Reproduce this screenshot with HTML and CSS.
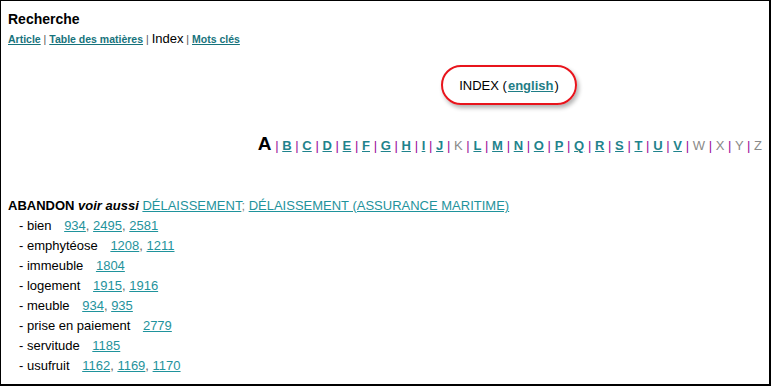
FILE: index.html
```html
<!DOCTYPE html>
<html lang="fr">

<head>
  <meta charset="utf-8">
  <link rel="stylesheet" href="styles.css">
</head>

<body>
  <div class="frame">
    <h1>Recherche</h1>
    <div class="nav">
      <a href="#">Article</a> <span class="sep">|</span>
      <a href="#">Table des matières</a> <span class="sep">|</span>
      <span class="current">Index</span> <span class="sep">|</span>
      <a href="#">Mots clés</a>
    </div>

    <div class="lang-row">
      <div class="lang-box">INDEX (<a href="#">english</a>)</div>
    </div>

    <div class="letters">
      <span class="active">A</span> <span class="bar">|</span>
      <a href="#">B</a> <span class="bar">|</span>
      <a href="#">C</a> <span class="bar">|</span>
      <a href="#">D</a> <span class="bar">|</span>
      <a href="#">E</a> <span class="bar">|</span>
      <a href="#">F</a> <span class="bar">|</span>
      <a href="#">G</a> <span class="bar">|</span>
      <a href="#">H</a> <span class="bar">|</span>
      <a href="#">I</a> <span class="bar">|</span>
      <a href="#">J</a> <span class="bar">|</span>
      <span class="off">K</span> <span class="bar">|</span>
      <a href="#">L</a> <span class="bar">|</span>
      <a href="#">M</a> <span class="bar">|</span>
      <a href="#">N</a> <span class="bar">|</span>
      <a href="#">O</a> <span class="bar">|</span>
      <a href="#">P</a> <span class="bar">|</span>
      <a href="#">Q</a> <span class="bar">|</span>
      <a href="#">R</a> <span class="bar">|</span>
      <a href="#">S</a> <span class="bar">|</span>
      <a href="#">T</a> <span class="bar">|</span>
      <a href="#">U</a> <span class="bar">|</span>
      <a href="#">V</a> <span class="bar">|</span>
      <span class="off">W</span> <span class="bar">|</span>
      <span class="off">X</span> <span class="bar">|</span>
      <span class="off">Y</span> <span class="bar">|</span>
      <span class="off">Z</span>
    </div>

    <div class="entries">
      <div class="entry">
        <b>ABANDON</b> <b><i>voir aussi</i></b>
        <a href="#">DÉLAISSEMENT</a><span class="punct">;</span>
        <a href="#">DÉLAISSEMENT (ASSURANCE MARITIME)</a>
      </div>
      <div class="sub">- bien <span class="refs"><a href="#">934</a>, <a href="#">2495</a>, <a href="#">2581</a></span></div>
      <div class="sub">- emphytéose <span class="refs"><a href="#">1208</a>, <a href="#">1211</a></span></div>
      <div class="sub">- immeuble <span class="refs"><a href="#">1804</a></span></div>
      <div class="sub">- logement <span class="refs"><a href="#">1915</a>, <a href="#">1916</a></span></div>
      <div class="sub">- meuble <span class="refs"><a href="#">934</a>, <a href="#">935</a></span></div>
      <div class="sub">- prise en paiement <span class="refs"><a href="#">2779</a></span></div>
      <div class="sub">- servitude <span class="refs"><a href="#">1185</a></span></div>
      <div class="sub">- usufruit <span class="refs"><a href="#">1162</a>, <a href="#">1169</a>, <a href="#">1170</a></span></div>
    </div>
  </div>
</body>

</html>
```

FILE: styles.css
```css
* {
  box-sizing: border-box;
}

body {
  margin: 0;
  font-family: 'Liberation Sans', Arial, sans-serif;
  font-size: 13px;
  color: #000;
  background: #fff;
}

a {
  color: #1f939c;
}

.frame {
  width: 771px;
  height: 386px;
  border: 1px solid #000;
  border-right-width: 2px;
  border-bottom-width: 2px;
  padding: 10px 7px 0 7px;
  overflow: hidden;
}

h1 {
  font-size: 14px;
  margin: 0;
  line-height: 16px;
}

.nav {
  margin-top: 4px;
  font-size: 10.5px;
  line-height: 15px;
}

.nav a {
  color: #17737c;
  font-weight: bold;
}

.nav .sep {
  color: #555;
}

.nav .current {
  font-size: 13px;
}

.lang-row {
  display: flex;
  justify-content: flex-end;
  padding-right: 185px;
  margin-top: 18px;
}

.lang-box {
  width: 136px;
  height: 40px;
  border: 2px solid #e8141c;
  border-radius: 20px;
  box-shadow: 2px 3px 4px rgba(0, 0, 0, 0.3);
  display: flex;
  align-items: center;
  justify-content: center;
  font-size: 13px;
}

.lang-box a {
  color: #1f7d86;
  font-weight: bold;
  margin: 0 1px;
}

.letters {
  text-align: right;
  margin-top: 29px;
  line-height: 20px;
  font-size: 13px;
  word-spacing: 0.05px;
}

.letters .active {
  font-size: 19px;
  font-weight: bold;
}

.letters a {
  font-weight: bold;
  color: #1f838c;
}

.letters .off {
  color: #8a8a8a;
}

.letters .bar {
  color: #9a0c9a;
}

.entries {
  margin-top: 40px;
}

.entry {
  line-height: 20px;
}

.entry .punct {
  color: #888;
}

.sub {
  line-height: 20px;
  padding-left: 11px;
}

.refs {
  margin-left: 9px;
  color: #666;
}
```
